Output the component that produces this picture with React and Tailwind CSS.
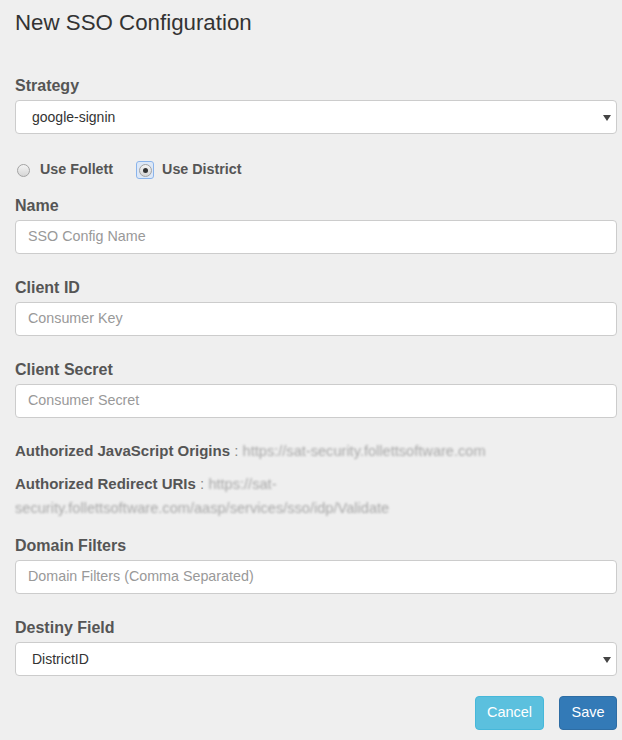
import { useState } from "react";

function Label({ children }) {
    return (
        <label className="block h-[20px] text-[16px] font-bold leading-[22px] text-[#555]">
            {children}
        </label>
    );
}

function TextInput({ placeholder }) {
    return (
        <div className="mt-[5px] flex h-[34px] items-center rounded-[4px] border border-[#ccc] bg-white px-[12px] text-[14.3px] text-[#999]">
            {placeholder}
        </div>
    );
}

function Select({ value }) {
    return (
        <div className="mt-[5px] flex h-[34px] items-center justify-between rounded-[4px] border border-[#ccc] bg-white pl-[16px] pr-[5px] text-[14px] text-[#333]">
            <span>{value}</span>
            <svg width="8" height="6" viewBox="0 0 8 6" className="mt-[1px]">
                <path d="M0 0 L8 0 L4 6 Z" fill="#444" />
            </svg>
        </div>
    );
}

function Radio({ checked, focused, label, onClick }) {
    return (
        <button onClick={onClick} className="flex items-center focus:outline-none">
            <span
                className={`flex h-[16px] w-[16px] items-center justify-center rounded-[2px] ${
                    focused ? "outline outline-[1px] outline-[#8ab4ec] bg-[#dde8f7]" : ""
                }`}
            >
                <span className="flex h-[13px] w-[13px] items-center justify-center rounded-full border border-[#a3a3a3] bg-gradient-to-b from-[#f4f4f4] to-[#d6d6d6]">
                    {checked && <span className="h-[5px] w-[5px] rounded-full bg-[#333]" />}
                </span>
            </span>
            <span className="ml-[9px] text-[14.3px] font-bold text-[#555]">{label}</span>
        </button>
    );
}

// blurred-out values from the original screenshot
function Hidden({ children }) {
    return <span className="text-[14.6px] text-[#a8a8a8] blur-[1.3px]">{children}</span>;
}

export default function App() {
    const [source, setSource] = useState("district");

    return (
        <div
            className="min-h-[740px] w-full bg-[#efefef] pl-[14px] pr-[5px] pt-[10px]"
            style={{ fontFamily: '"Liberation Sans", Arial, sans-serif' }}
        >
            <h1 className="ml-[1px] h-[26px] text-[22.3px] font-normal leading-[26px] text-[#333]">
                New SSO Configuration
            </h1>

            <div className="ml-[1px]">
                <div className="mt-[39px]">
                    <Label>Strategy</Label>
                    <Select value="google-signin" />
                </div>

                <div className="mt-[27px] flex h-[18px] items-center gap-[24px]">
                    <Radio
                        label="Use Follett"
                        checked={source === "follett"}
                        focused={false}
                        onClick={() => setSource("follett")}
                    />
                    <Radio
                        label="Use District"
                        checked={source === "district"}
                        focused={source === "district"}
                        onClick={() => setSource("district")}
                    />
                </div>

                <div className="mt-[16px]">
                    <Label>Name</Label>
                    <TextInput placeholder="SSO Config Name" />
                </div>

                <div className="mt-[23px]">
                    <Label>Client ID</Label>
                    <TextInput placeholder="Consumer Key" />
                </div>

                <div className="mt-[23px]">
                    <Label>Client Secret</Label>
                    <TextInput placeholder="Consumer Secret" />
                </div>

                <div className="mt-[23px] text-[15px] leading-[20px]">
                    <p>
                        <span className="font-bold text-[#555]">Authorized JavaScript Origins</span>
                        <span className="text-[#888]"> : </span>
                        <Hidden>https://sat-security.follettsoftware.com</Hidden>
                    </p>
                    <p className="mt-[11px] leading-[24px]">
                        <span className="font-bold text-[#555]">Authorized Redirect URIs</span>
                        <span className="text-[#888]"> : </span>
                        <Hidden>https://sat-</Hidden>
                        <br />
                        <Hidden>security.follettsoftware.com/aasp/services/sso/idp/Validate</Hidden>
                    </p>
                </div>

                <div className="mt-[15px]">
                    <Label>Domain Filters</Label>
                    <TextInput placeholder="Domain Filters (Comma Separated)" />
                </div>

                <div className="mt-[23px]">
                    <Label>Destiny Field</Label>
                    <Select value="DistrictID" />
                </div>

                <div className="mt-[20px] flex justify-end gap-[15px]">
                    <button className="h-[34px] w-[69px] rounded-[4px] border border-[#46b8da] bg-[#5bc0de] text-[14.5px] text-white">
                        Cancel
                    </button>
                    <button className="h-[34px] w-[58px] rounded-[4px] border border-[#2e6da4] bg-[#337ab7] text-[14.5px] text-white">
                        Save
                    </button>
                </div>
            </div>
        </div>
    );
}
